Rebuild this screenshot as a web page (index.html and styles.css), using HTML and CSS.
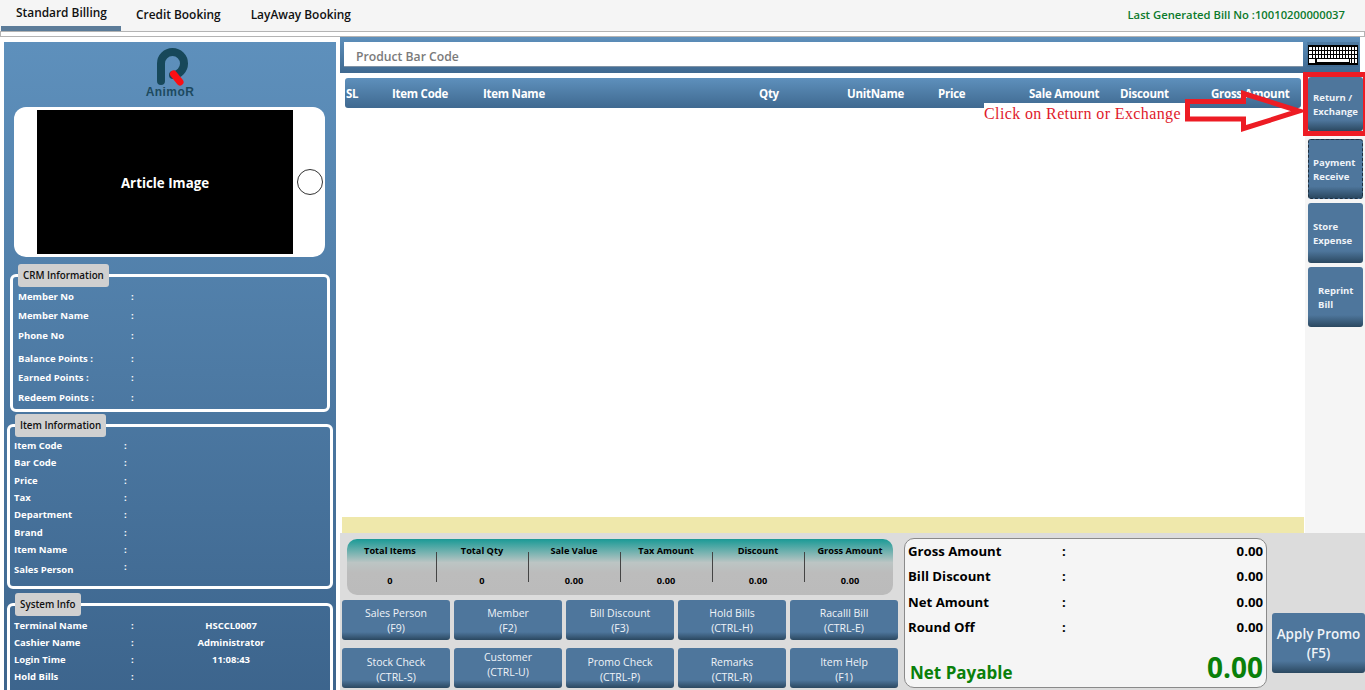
FILE: index.html
```html
<!DOCTYPE html>
<html lang="en">
<head>
<meta charset="utf-8">
<title>Standard Billing</title>
<link rel="stylesheet" href="styles.css">
</head>
<body>
<header class="topbar">
  <nav class="tabs">
    <a class="tab tab-active">Standard Billing</a>
    <a class="tab">Credit Booking</a>
    <a class="tab">LayAway Booking</a>
  </nav>
  <div class="last-bill">Last Generated Bill No :10010200000037</div>
</header>
<div class="rule"></div>
<main class="main">
  <aside class="left">
    <div class="panel">
      <div class="logo">
        <svg class="logo-mark" width="32" height="38" viewBox="0 0 32 38">
          <path d="M4 33V15.500A11.500 11.500 0 0 1 27 15.500A11.500 11.500 0 0 1 16 27" fill="none" stroke="#17485a" stroke-width="8" stroke-linecap="round"/>
          <path d="M16.500 26L23 34" fill="none" stroke="#fb0f14" stroke-width="7" stroke-linecap="round"/>
        </svg>
        <div class="logo-text">AnimoR</div>
      </div>
      <div class="phone">
        <div class="screen">Article Image</div>
        <div class="home"></div>
      </div>
      <fieldset class="group group-crm">
        <legend>CRM Information</legend>
        <div class="row r19"><span>Member No</span><span>:</span></div>
        <div class="row r20"><span>Member Name</span><span>:</span></div>
        <div class="row r23"><span>Phone No</span><span>:</span></div>
        <div class="row r19"><span>Balance Points :</span><span>:</span></div>
        <div class="row r20"><span>Earned Points :</span><span>:</span></div>
        <div class="row r19"><span>Redeem Points :</span><span>:</span></div>
      </fieldset>
      <fieldset class="group group-item">
        <legend>Item Information</legend>
        <div class="row r17"><span>Item Code</span><span>:</span></div>
        <div class="row r18"><span>Bar Code</span><span>:</span></div>
        <div class="row r17"><span>Price</span><span>:</span></div>
        <div class="row r17"><span>Tax</span><span>:</span></div>
        <div class="row r18"><span>Department</span><span>:</span></div>
        <div class="row r17"><span>Brand</span><span>:</span></div>
        <div class="row r20"><span>Item Name</span><span>:</span></div>
        <div class="row r17"><span>Sales Person</span><span class="colon-up">:</span></div>
      </fieldset>
      <fieldset class="group group-system">
        <legend>System Info</legend>
        <div class="row r17"><span>Terminal Name</span><span>:</span><span class="val">HSCCL0007</span></div>
        <div class="row r17"><span>Cashier Name</span><span>:</span><span class="val">Administrator</span></div>
        <div class="row r17"><span>Login Time</span><span>:</span><span class="val">11:08:43</span></div>
        <div class="row r17"><span>Hold Bills</span><span>:</span><span class="val"></span></div>
      </fieldset>
    </div>
  </aside>
  <section class="work">
    <div class="search">
      <div class="search-input">Product Bar Code</div>
      <div class="keyboard">
        <svg width="50" height="20" viewBox="0 0 50 20">
          <rect width="50" height="20" fill="#000"/>
          <path d="M1 2h48v3H1zM1 6h48v3H1zM1 10h48v3H1zM1 14h7v4H1zM42 14h7v4h-7zM9 14h32v3H9z" fill="#fff"/>
          <path d="M4.500 1v13M7.500 1v18M10.500 1v13M13.500 1v13M16.500 1v13M19.500 1v13M22.500 1v13M25.500 1v13M28.500 1v13M31.500 1v13M34.500 1v13M37.500 1v13M40.500 1v13M43.500 1v18M46.500 1v18" stroke="#000" stroke-width="1"/>
        </svg>
      </div>
    </div>
    <div class="upper">
      <div class="table-wrap">
        <div class="thead">
          <span>SL</span><span>Item Code</span><span>Item Name</span><span>Qty</span><span>UnitName</span><span>Price</span><span>Sale Amount</span><span>Discount</span><span>Gross Amount</span>
        </div>
        <div class="tbody"></div>
        <div class="strip"></div>
      </div>
      <div class="side">
        <button class="side-btn">Return /<br>Exchange</button>
        <button class="side-btn side-focus">Payment<br>Receive</button>
        <button class="side-btn">Store<br>Expense</button>
        <button class="side-btn side-indent">Reprint<br>Bill</button>
      </div>
    </div>
    <div class="bottom">
      <div class="bottom-left">
        <div class="totals">
          <div class="total"><b>Total Items</b><b>0</b></div>
          <div class="total"><b>Total Qty</b><b>0</b></div>
          <div class="total"><b>Sale Value</b><b>0.00</b></div>
          <div class="total"><b>Tax Amount</b><b>0.00</b></div>
          <div class="total"><b>Discount</b><b>0.00</b></div>
          <div class="total"><b>Gross Amount</b><b>0.00</b></div>
        </div>
        <div class="actions">
          <button class="btn btn-top">Sales Person<br>(F9)</button>
          <button class="btn btn-top">Member<br>(F2)</button>
          <button class="btn btn-top">Bill Discount<br>(F3)</button>
          <button class="btn btn-top">Hold Bills<br>(CTRL-H)</button>
          <button class="btn btn-top">Racalll Bill<br>(CTRL-E)</button>
          <button class="btn">Stock Check<br>(CTRL-S)</button>
          <button class="btn btn-raised">Customer<br>(CTRL-U)</button>
          <button class="btn">Promo Check<br>(CTRL-P)</button>
          <button class="btn">Remarks<br>(CTRL-R)</button>
          <button class="btn">Item Help<br>(F1)</button>
        </div>
      </div>
      <div class="summary">
        <div class="sum-row"><span>Gross Amount</span><span>:</span><span>0.00</span></div>
        <div class="sum-row"><span>Bill Discount</span><span>:</span><span>0.00</span></div>
        <div class="sum-row"><span>Net Amount</span><span>:</span><span>0.00</span></div>
        <div class="sum-row"><span>Round Off</span><span>:</span><span>0.00</span></div>
        <div class="net"><span class="net-label">Net Payable</span><span class="net-value">0.00</span></div>
      </div>
      <button class="btn promo">Apply Promo<br>(F5)</button>
    </div>
  </section>
</main>
<div class="note-text">Click on Return or Exchange</div>
<svg class="note-arrow" width="122" height="44" viewBox="0 0 122 44">
  <path d="M4.500 11.500H60.500V3.500L116 21L60.500 38.500V29H4.500Z" fill="none" stroke="#ed1c24" stroke-width="5"/>
</svg>
<div class="note-box"></div>
</body>
</html>
```
FILE: styles.css
```css
* { box-sizing: border-box; }
html, body { margin: 0; height: 690px; overflow: hidden; background: #fff; }
body { font-family: "Open Sans", "Noto Sans", sans-serif; color: #000; position: relative; }

.topbar { height: 32px; background: #f5f5f5; border-bottom: 1px solid #b4b4b4; display: flex; justify-content: space-between; padding-left: 1px; }
.tabs { display: flex; }
.tab { font-size: 11.900px; font-weight: 600; padding: 6px 15px 0; height: 31px; line-height: 16px; color: #111; white-space: nowrap; }
.tab-active { width: 120px; border-bottom: 5px solid #5c7c99; padding-top: 4px; }
.last-bill { font-size: 11.250px; font-weight: 600; color: #0b7a2c; padding: 7px 20px 0 0; line-height: 16px; }
.rule { height: 5px; border: 1px solid #b4b4b4; border-top: 0; width: 1365px; }

.main { display: flex; height: 653px; }
.left { width: 340px; padding: 5px 4px 0; flex: none; }
.panel { width: 332px; height: 660px; background: linear-gradient(#5e90bc, #3c648c); padding-top: 6px; }

.logo { height: 59px; display: flex; flex-direction: column; align-items: center; }
.logo-mark { display: block; margin-left: 5px; flex: none; }
.logo-text { font-family: "Liberation Sans", sans-serif; font-size: 12px; font-weight: 700; color: #1d4a60; letter-spacing: .4px; line-height: 9px; margin-top: 2px; }

.phone { width: 311px; height: 150px; margin-left: 10px; background: #fff; border-radius: 12px; padding: 3px 0 0 23px; display: flex; }
.screen { width: 256px; height: 144px; background: #000; color: #fff; font-size: 13.300px; font-weight: 700; display: flex; align-items: center; justify-content: center; padding-top: 1px; }
.home { width: 26px; height: 26px; border: 1px solid #333; border-radius: 50%; margin: 59px 0 0 4px; }

.group { margin: 0; border: 3px solid #fff; border-radius: 6px; padding: 0; min-width: 0; }
.group legend { background: #d0d0d0; color: #111; font-size: 9.800px; font-weight: 600; height: 23px; line-height: 23px; border-radius: 3px; padding: 0 5px; margin: 0 3px 0 1px; white-space: nowrap; }
.group-crm { width: 320px; height: 148px; margin: 7px 0 0 6px; padding: 3px 0 0 5px; }
.group-crm legend { margin-left: 0; }
.group-item { width: 326px; height: 175px; margin: 2px 0 0 3px; padding: 2px 0 0 4px; }
.group-system { width: 326px; height: 110px; margin: 4px 0 0 3px; padding: 3px 0 0 4px; }

.row { display: grid; font-size: 9.500px; font-weight: 700; color: #fff; line-height: 14px; white-space: nowrap; }
.group-crm .row { grid-template-columns: 113px 10px; }
.group-item .row { grid-template-columns: 110px 10px; }
.group-system .row { grid-template-columns: 117px 10px 180px; }
.val { text-align: center; }
.r17 { height: 17px; }
.r18 { height: 18px; }
.r19 { height: 19px; }
.r20 { height: 20px; }
.r23 { height: 23px; }
.colon-up { margin-top: -3px; }

.work { width: 1025px; flex: none; display: flex; flex-direction: column; }
.search { width: 1020px; height: 36px; background: linear-gradient(#5e90bc, #3f6990); padding: 5px 0 6px 4px; display: flex; flex: none; }
.search-input { width: 959px; height: 25px; background: #fff; color: #7a7a7a; font-size: 12.200px; font-weight: 600; padding: 2px 0 0 12px; line-height: 25px; border-bottom: 1px solid #7f93a6; }
.keyboard { width: 52px; margin-left: 4px; padding: 3px 0 0 1px; background: linear-gradient(#4f7ba2, #3f6990); }
.keyboard svg { display: block; }

.upper { display: flex; height: 460px; flex: none; }
.table-wrap { width: 965px; display: flex; flex-direction: column; }
.thead { width: 956px; height: 30px; margin: 5px 0 0 5px; flex: none; border-radius: 3px; background: linear-gradient(#5e90bc, #3f6990); color: #fff; font-size: 11.500px; font-weight: 700; line-height: 32px; display: grid; grid-template-columns: 46px 91px 276px 88px 91px 91px 91px 91px 91px; padding-left: 1px; letter-spacing: -.26px; white-space: nowrap; }
.tbody { flex: 1; }
.strip { height: 16px; flex: none; width: 962px; margin-left: 2px; background: #efe8ab; }

.side { width: 60px; flex: none; background: #f5f5f5; display: flex; flex-direction: column; gap: 4px; padding: 4px 0 0 3px; }
.side-btn, .btn { border: 0; margin: 0; font-family: inherit; color: #eef3f8; background: linear-gradient(#4e769c 0, #4e769c 80%, #2b4860 100%); border-radius: 3px; }
.side-btn { width: 55px; height: 60px; padding: 2px 0 0 5px; text-align: left; font-size: 9.500px; font-weight: 700; line-height: 14px; }
.side-btn:first-child { height: 54px; margin-bottom: 4px; }
.side-focus { border: 1px dashed #1d2f40; padding-left: 4px; }
.side-indent { padding-left: 10px; }

.bottom { height: 157px; background: #dcdcdc; display: flex; flex: none; padding-top: 5px; }
.bottom-left { width: 564px; flex: none; padding-left: 2px; }
.totals { width: 546px; height: 56px; margin: 1px 0 0 5px; border-radius: 10px; background: linear-gradient(#1a9a96 0, #bcc5c4 42%, #bcbcbc 60%, #bbb 100%); display: grid; grid-template-columns: repeat(6, 92px); justify-content: center; }
.total { display: flex; flex-direction: column; align-items: center; justify-content: space-between; font-size: 9.200px; line-height: 13px; padding: 5px 0 8px; position: relative; white-space: nowrap; }
.total + .total::before { content: ""; position: absolute; left: 0; top: 13px; height: 30px; border-left: 1px solid #444; }

.actions { display: grid; grid-template-columns: repeat(5, 108px); grid-auto-rows: 40px; gap: 8px 4px; margin-top: 5px; }
.btn { font-size: 10.500px; font-weight: 500; line-height: 15px; padding: 3px 0 0; }
.btn-top { padding-top: 1px; }
.btn-raised { padding: 0 0 7px; }

.summary { width: 363px; height: 150px; border: 1px solid #8a8a8a; border-radius: 10px; background: #f5f5f5; display: flex; flex-direction: column; padding: 0 3px; }
.sum-row { display: grid; grid-template-columns: 154px 1fr auto; font-size: 13.200px; font-weight: 700; height: 25.400px; line-height: 25px; }
.net { display: flex; justify-content: space-between; margin-top: 9px; padding-left: 2px; }
.net-label { font-size: 17px; font-weight: 700; color: #0a800a; line-height: 24px; margin-top: 11px; }
.net-value { font-size: 28px; font-weight: 700; color: #0a800a; line-height: 34px; }

.promo { width: 93px; height: 60px; margin: 75px 0 0 5px; flex: none; font-size: 13.500px; font-weight: 600; line-height: 19px; padding: 2px 0 0; }

.note-text { position: absolute; left: 984px; top: 103px; width: 201px; height: 20px; background: #fff; color: #e01a2b; font-family: "Liberation Serif", serif; font-size: 16px; line-height: 21px; letter-spacing: .38px; white-space: nowrap; }
.note-arrow { position: absolute; left: 1183px; top: 90px; }
.note-box { position: absolute; left: 1303px; top: 72px; width: 62px; height: 64px; border: 5px solid #ed1c24; border-right-width: 2px; }
```
